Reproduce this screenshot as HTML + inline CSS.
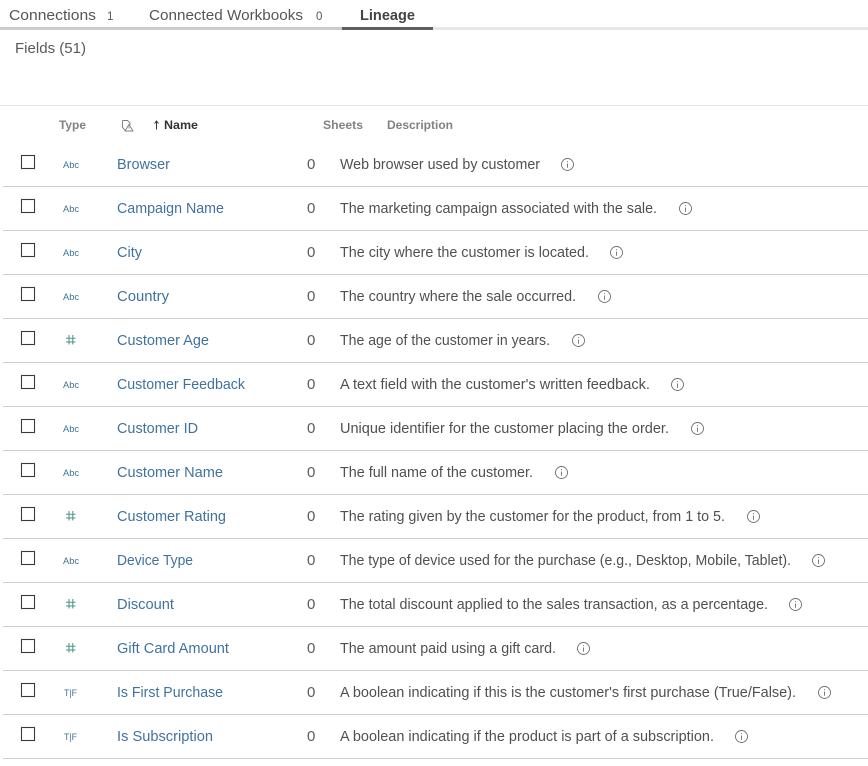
<!DOCTYPE html>
<html><head><meta charset="utf-8"><style>
html,body{margin:0;padding:0;background:#fff;width:868px;height:766px;overflow:hidden}
svg{display:block}
text{font-family:"Liberation Sans",sans-serif}
.n{font-size:15px;fill:#41729f}
.d{font-size:15px;fill:#505050}
.z{font-size:15px;fill:#5a5a5a}
.h{font-size:12px;font-weight:bold;fill:#828282}
.t{font-size:9.5px;fill:#3f7396}
.tf{font-size:9.5px;fill:#3f7396}
</style></head><body>
<svg width="868" height="766" viewBox="0 0 868 766" xmlns="http://www.w3.org/2000/svg">
<defs>
<g id="cb"><rect x="21.5" y="-8.5" width="13" height="13" fill="#fff" stroke="#3a3a3a" stroke-width="1.1"/></g>
<g id="i" fill="none" stroke="#6e6e6e" stroke-width="0.9"><circle cx="0" cy="0" r="6"/><path d="M0 -3.4V-2.4M0 -1V3.2"/></g>
<g id="hash" fill="none" stroke="#4a9388" stroke-width="1"><path d="M69 -5V4.5M72.8 -5V4.5M66 -1.7H75.5M66 2H75.5"/></g>
</defs>

<text x="9" y="20" font-size="15" fill="#555" textLength="87" lengthAdjust="spacingAndGlyphs">Connections</text>
<text x="107" y="20" font-size="11.5" fill="#555">1</text>
<text x="149" y="20" font-size="15" fill="#555" textLength="154" lengthAdjust="spacingAndGlyphs">Connected Workbooks</text>
<text x="316" y="20" font-size="11.5" fill="#555">0</text>
<text x="360" y="20" font-size="15" font-weight="bold" fill="#444" textLength="55" lengthAdjust="spacingAndGlyphs">Lineage</text>
<rect x="0" y="27" width="868" height="3" fill="#e8e8e8"/>
<rect x="0" y="27" width="342" height="3" fill="#cbcbcb"/>
<rect x="342" y="27" width="91" height="3" fill="#5f5f63"/>
<text x="15" y="53" font-size="15" fill="#5a5a5a" textLength="71" lengthAdjust="spacingAndGlyphs">Fields (51)</text>
<rect x="0" y="105" width="868" height="1" fill="#e8e8e8"/>

<text class="h" x="59" y="129" textLength="27" lengthAdjust="spacingAndGlyphs">Type</text>
<g fill="none" stroke="#7c7c7c" stroke-width="0.9"><path d="M122.5 120.5h5l2.5 2.5v2M122.5 120.5v7l2.5 2.5"/><path d="M129 124.5l-4 6.5h8z" fill="#fff"/><path d="M129 126.5v2"/></g>
<path d="M156.5 129.5v-8M154.5 123.5l2-2.5 2 2.5" fill="none" stroke="#333" stroke-width="1"/>
<text x="164" y="129" font-size="12" font-weight="bold" fill="#333" textLength="34" lengthAdjust="spacingAndGlyphs">Name</text>
<text class="h" x="323" y="129" textLength="40" lengthAdjust="spacingAndGlyphs">Sheets</text>
<text class="h" x="387" y="129" textLength="66" lengthAdjust="spacingAndGlyphs">Description</text>

<g transform="translate(0,164)"><use href="#cb"/><text class="t" x="63" y="4" textLength="16" lengthAdjust="spacingAndGlyphs">Abc</text><text class="n" x="117" y="5" textLength="53" lengthAdjust="spacingAndGlyphs">Browser</text><text class="z" x="307" y="5">0</text><text class="d" x="340" y="5" textLength="200" lengthAdjust="spacingAndGlyphs">Web browser used by customer</text><use href="#i" x="567.5" y="0.5"/><rect x="3" y="22" width="865" height="1" fill="#d0d0d0"/></g>
<g transform="translate(0,208)"><use href="#cb"/><text class="t" x="63" y="4" textLength="16" lengthAdjust="spacingAndGlyphs">Abc</text><text class="n" x="117" y="5" textLength="107" lengthAdjust="spacingAndGlyphs">Campaign Name</text><text class="z" x="307" y="5">0</text><text class="d" x="340" y="5" textLength="317" lengthAdjust="spacingAndGlyphs">The marketing campaign associated with the sale.</text><use href="#i" x="685.5" y="0.5"/><rect x="3" y="22" width="865" height="1" fill="#d0d0d0"/></g>
<g transform="translate(0,252)"><use href="#cb"/><text class="t" x="63" y="4" textLength="16" lengthAdjust="spacingAndGlyphs">Abc</text><text class="n" x="117" y="5" textLength="25" lengthAdjust="spacingAndGlyphs">City</text><text class="z" x="307" y="5">0</text><text class="d" x="340" y="5" textLength="249" lengthAdjust="spacingAndGlyphs">The city where the customer is located.</text><use href="#i" x="616.5" y="0.5"/><rect x="3" y="22" width="865" height="1" fill="#d0d0d0"/></g>
<g transform="translate(0,296)"><use href="#cb"/><text class="t" x="63" y="4" textLength="16" lengthAdjust="spacingAndGlyphs">Abc</text><text class="n" x="117" y="5" textLength="52" lengthAdjust="spacingAndGlyphs">Country</text><text class="z" x="307" y="5">0</text><text class="d" x="340" y="5" textLength="236" lengthAdjust="spacingAndGlyphs">The country where the sale occurred.</text><use href="#i" x="604.5" y="0.5"/><rect x="3" y="22" width="865" height="1" fill="#d0d0d0"/></g>
<g transform="translate(0,340)"><use href="#cb"/><use href="#hash"/><text class="n" x="117" y="5" textLength="92" lengthAdjust="spacingAndGlyphs">Customer Age</text><text class="z" x="307" y="5">0</text><text class="d" x="340" y="5" textLength="210" lengthAdjust="spacingAndGlyphs">The age of the customer in years.</text><use href="#i" x="578.5" y="0.5"/><rect x="3" y="22" width="865" height="1" fill="#d0d0d0"/></g>
<g transform="translate(0,384)"><use href="#cb"/><text class="t" x="63" y="4" textLength="16" lengthAdjust="spacingAndGlyphs">Abc</text><text class="n" x="117" y="5" textLength="128" lengthAdjust="spacingAndGlyphs">Customer Feedback</text><text class="z" x="307" y="5">0</text><text class="d" x="340" y="5" textLength="310" lengthAdjust="spacingAndGlyphs">A text field with the customer's written feedback.</text><use href="#i" x="677.5" y="0.5"/><rect x="3" y="22" width="865" height="1" fill="#d0d0d0"/></g>
<g transform="translate(0,428)"><use href="#cb"/><text class="t" x="63" y="4" textLength="16" lengthAdjust="spacingAndGlyphs">Abc</text><text class="n" x="117" y="5" textLength="81" lengthAdjust="spacingAndGlyphs">Customer ID</text><text class="z" x="307" y="5">0</text><text class="d" x="340" y="5" textLength="329" lengthAdjust="spacingAndGlyphs">Unique identifier for the customer placing the order.</text><use href="#i" x="697.5" y="0.5"/><rect x="3" y="22" width="865" height="1" fill="#d0d0d0"/></g>
<g transform="translate(0,472)"><use href="#cb"/><text class="t" x="63" y="4" textLength="16" lengthAdjust="spacingAndGlyphs">Abc</text><text class="n" x="117" y="5" textLength="106" lengthAdjust="spacingAndGlyphs">Customer Name</text><text class="z" x="307" y="5">0</text><text class="d" x="340" y="5" textLength="193" lengthAdjust="spacingAndGlyphs">The full name of the customer.</text><use href="#i" x="561.5" y="0.5"/><rect x="3" y="22" width="865" height="1" fill="#d0d0d0"/></g>
<g transform="translate(0,516)"><use href="#cb"/><use href="#hash"/><text class="n" x="117" y="5" textLength="109" lengthAdjust="spacingAndGlyphs">Customer Rating</text><text class="z" x="307" y="5">0</text><text class="d" x="340" y="5" textLength="385" lengthAdjust="spacingAndGlyphs">The rating given by the customer for the product, from 1 to 5.</text><use href="#i" x="753.5" y="0.5"/><rect x="3" y="22" width="865" height="1" fill="#d0d0d0"/></g>
<g transform="translate(0,560)"><use href="#cb"/><text class="t" x="63" y="4" textLength="16" lengthAdjust="spacingAndGlyphs">Abc</text><text class="n" x="117" y="5" textLength="76" lengthAdjust="spacingAndGlyphs">Device Type</text><text class="z" x="307" y="5">0</text><text class="d" x="340" y="5" textLength="451" lengthAdjust="spacingAndGlyphs">The type of device used for the purchase (e.g., Desktop, Mobile, Tablet).</text><use href="#i" x="818.5" y="0.5"/><rect x="3" y="22" width="865" height="1" fill="#d0d0d0"/></g>
<g transform="translate(0,604)"><use href="#cb"/><use href="#hash"/><text class="n" x="117" y="5" textLength="57" lengthAdjust="spacingAndGlyphs">Discount</text><text class="z" x="307" y="5">0</text><text class="d" x="340" y="5" textLength="428" lengthAdjust="spacingAndGlyphs">The total discount applied to the sales transaction, as a percentage.</text><use href="#i" x="795.5" y="0.5"/><rect x="3" y="22" width="865" height="1" fill="#d0d0d0"/></g>
<g transform="translate(0,648)"><use href="#cb"/><use href="#hash"/><text class="n" x="117" y="5" textLength="112" lengthAdjust="spacingAndGlyphs">Gift Card Amount</text><text class="z" x="307" y="5">0</text><text class="d" x="340" y="5" textLength="216" lengthAdjust="spacingAndGlyphs">The amount paid using a gift card.</text><use href="#i" x="583.5" y="0.5"/><rect x="3" y="22" width="865" height="1" fill="#d0d0d0"/></g>
<g transform="translate(0,692)"><use href="#cb"/><text class="tf" x="64" y="4" textLength="13" lengthAdjust="spacingAndGlyphs">T|F</text><text class="n" x="117" y="5" textLength="106" lengthAdjust="spacingAndGlyphs">Is First Purchase</text><text class="z" x="307" y="5">0</text><text class="d" x="340" y="5" textLength="456" lengthAdjust="spacingAndGlyphs">A boolean indicating if this is the customer's first purchase (True/False).</text><use href="#i" x="824.5" y="0.5"/><rect x="3" y="22" width="865" height="1" fill="#d0d0d0"/></g>
<g transform="translate(0,736)"><use href="#cb"/><text class="tf" x="64" y="4" textLength="13" lengthAdjust="spacingAndGlyphs">T|F</text><text class="n" x="117" y="5" textLength="96" lengthAdjust="spacingAndGlyphs">Is Subscription</text><text class="z" x="307" y="5">0</text><text class="d" x="340" y="5" textLength="374" lengthAdjust="spacingAndGlyphs">A boolean indicating if the product is part of a subscription.</text><use href="#i" x="741.5" y="0.5"/><rect x="3" y="22" width="865" height="1" fill="#d0d0d0"/></g>
</svg>
</body></html>
